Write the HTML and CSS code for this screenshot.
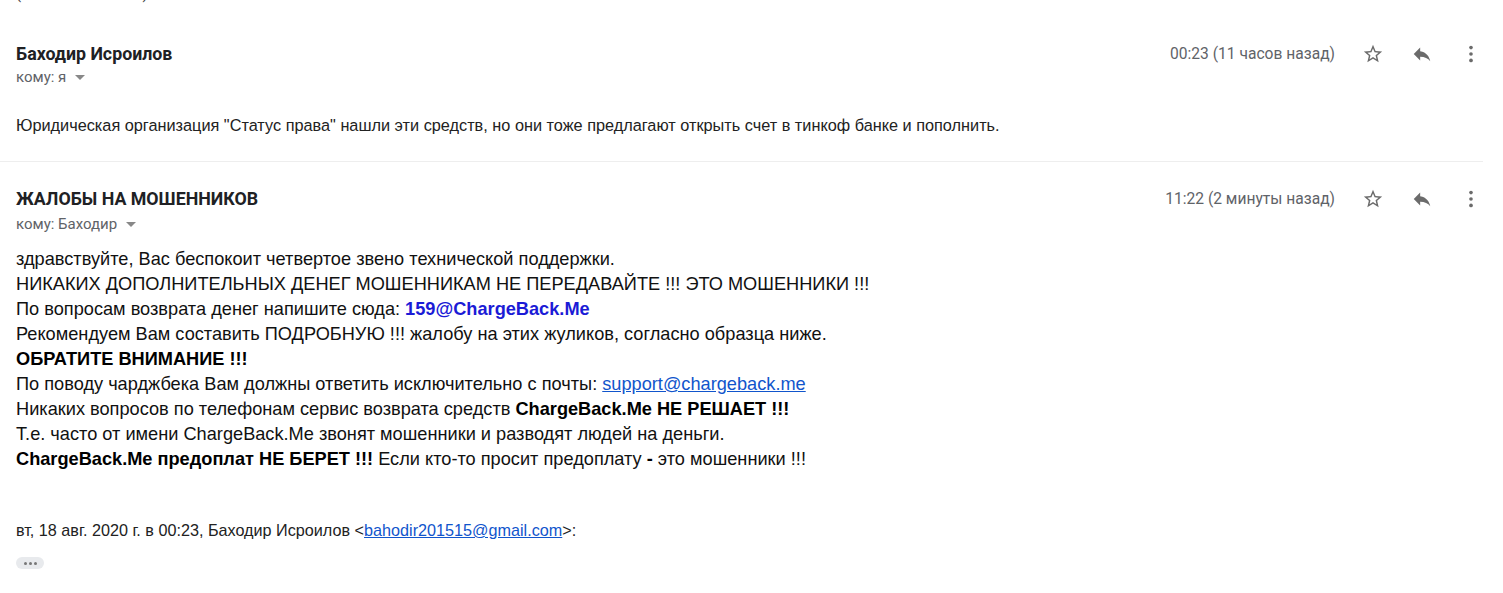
FILE: index.html
```html
<!DOCTYPE html>
<html lang="ru">
<head>
<meta charset="utf-8">
<link rel="stylesheet" href="styles.css">
</head>
<body>
<div class="page">
  <div class="prev"><span class="prev-text">(без темы письма)</span></div>

  <div class="msg msg1">
    <div class="head">
      <div class="sender">Баходир Исроилов</div>
      <div class="meta">
        <span class="time">00:23 (11 часов назад)</span>
        <span class="icon"><svg viewBox="0 0 24 24" width="22" height="22"><path d="M22 9.24l-7.19-.62L12 2 9.19 8.63 2 9.24l5.46 4.73L5.82 21 12 17.27 18.18 21l-1.63-7.03L22 9.24zM12 15.4l-3.76 2.27 1-4.28-3.32-2.88 4.38-.38L12 6.1l1.71 4.04 4.38.38-3.32 2.88 1 4.28L12 15.4z"/></svg></span>
        <span class="icon"><svg viewBox="0 0 24 24" width="22" height="22"><path d="M10 9V5l-7 7 7 7v-4.1c5 0 8.5 1.6 11 5.1-1-5-4-10-11-11z"/></svg></span>
        <span class="icon"><svg viewBox="0 0 24 24" width="22" height="22"><circle cx="12" cy="5" r="2"/><circle cx="12" cy="12" r="2"/><circle cx="12" cy="19" r="2"/></svg></span>
      </div>
    </div>
    <div class="to">кому: я <span class="caret"></span></div>
    <div class="body1">Юридическая организация "Статус права" нашли эти средств, но они тоже предлагают открыть счет в тинкоф банке и пополнить.</div>
  </div>

  <div class="divider"></div>

  <div class="msg msg2">
    <div class="head">
      <div class="sender">ЖАЛОБЫ НА МОШЕННИКОВ</div>
      <div class="meta">
        <span class="time">11:22 (2 минуты назад)</span>
        <span class="icon"><svg viewBox="0 0 24 24" width="22" height="22"><path d="M22 9.24l-7.19-.62L12 2 9.19 8.63 2 9.24l5.46 4.73L5.82 21 12 17.27 18.18 21l-1.63-7.03L22 9.24zM12 15.4l-3.76 2.27 1-4.28-3.32-2.88 4.38-.38L12 6.1l1.71 4.04 4.38.38-3.32 2.88 1 4.28L12 15.4z"/></svg></span>
        <span class="icon"><svg viewBox="0 0 24 24" width="22" height="22"><path d="M10 9V5l-7 7 7 7v-4.1c5 0 8.5 1.6 11 5.1-1-5-4-10-11-11z"/></svg></span>
        <span class="icon"><svg viewBox="0 0 24 24" width="22" height="22"><circle cx="12" cy="5" r="2"/><circle cx="12" cy="12" r="2"/><circle cx="12" cy="19" r="2"/></svg></span>
      </div>
    </div>
    <div class="to">кому: Баходир <span class="caret"></span></div>
    <div class="body2">
      <div>здравствуйте, Вас беспокоит четвертое звено технической поддержки.</div>
      <div>НИКАКИХ ДОПОЛНИТЕЛЬНЫХ ДЕНЕГ МОШЕННИКАМ НЕ ПЕРЕДАВАЙТЕ !!! ЭТО МОШЕННИКИ !!!</div>
      <div>По вопросам возврата денег напишите сюда: <b class="blue">159@ChargeBack.Me</b></div>
      <div>Рекомендуем Вам составить ПОДРОБНУЮ !!! жалобу на этих жуликов, согласно образца ниже.</div>
      <div><b>ОБРАТИТЕ ВНИМАНИЕ !!!</b></div>
      <div>По поводу чарджбека Вам должны ответить исключительно с почты: <a class="link" href="#">support@chargeback.me</a></div>
      <div>Никаких вопросов по телефонам сервис возврата средств <b>ChargeBack.Me НЕ РЕШАЕТ !!!</b></div>
      <div>Т.е. часто от имени ChargeBack.Me звонят мошенники и разводят людей на деньги.</div>
      <div><b>ChargeBack.Me предоплат НЕ БЕРЕТ !!!</b> Если кто-то просит предоплату <b>-</b> это мошенники !!!</div>
    </div>
    <div class="quote">вт, 18 авг. 2020 г. в 00:23, Баходир Исроилов &lt;<a class="link" href="#">bahodir201515@gmail.com</a>&gt;:</div>
    <div class="more"><span></span><span></span><span></span></div>
  </div>
</div>
</body>
</html>
```

FILE: styles.css
```css
* { box-sizing: border-box; }
html, body { margin: 0; padding: 0; background: #fff; }
body { font-family: Roboto, "Liberation Sans", Arial, sans-serif; color: #222; }

.page { width: 1483px; }

.prev { height: 4px; overflow: hidden; padding-left: 16px; }
.prev-text { display: block; margin-top: -15px; font-size: 15px; line-height: 18px; color: #444; }

.msg { padding-left: 16px; }
.msg1 { padding-top: 40px; padding-bottom: 26px; }
.msg2 { padding-top: 27px; }

.head { display: flex; justify-content: space-between; align-items: center; height: 20px; }
.sender { font-weight: 700; font-size: 17.8px; line-height: 20px; color: #202124; }
.meta { display: flex; align-items: center; }
.time { font-size: 15.6px; color: #5f6368; margin-right: 26px; }
.icon { width: 24px; height: 24px; display: flex; align-items: center; justify-content: center; margin-left: 25px; fill: #6b6b6b; }
.time + .icon { margin-left: 0; }

.to { font-size: 15px; line-height: 18px; color: #5f6368; margin-top: 4px; display: flex; align-items: center; gap: 5px; }
.msg2 .to { margin-top: 6px; }
.caret { width: 0; height: 0; border-left: 5px solid transparent; border-right: 5px solid transparent; border-top: 5px solid #888; margin-left: 4px; }

.body1 { font-family: "Liberation Sans", Arial, sans-serif; font-size: 16.3px; line-height: 20px; color: #222; margin-top: 29px; }

.divider { height: 1px; background: #eeeeee; }

.body2 { font-family: "Liberation Sans", Arial, sans-serif; font-size: 18.2px; line-height: 25px; color: #111; margin-top: 14px; }
.body2 b { font-weight: 700; color: #000; }
.body2 b.blue { color: #1b1bd6; }
.link { color: #1155cc; text-decoration: underline; }

.quote { font-family: "Liberation Sans", Arial, sans-serif; font-size: 16.2px; line-height: 20px; color: #222; margin-top: 48px; }

.more { margin-top: 17px; width: 28px; height: 12px; border-radius: 6px; background: #e8eaed; display: flex; align-items: center; justify-content: center; gap: 2px; }
.more span { width: 3px; height: 3px; border-radius: 50%; background: #777; }
```
